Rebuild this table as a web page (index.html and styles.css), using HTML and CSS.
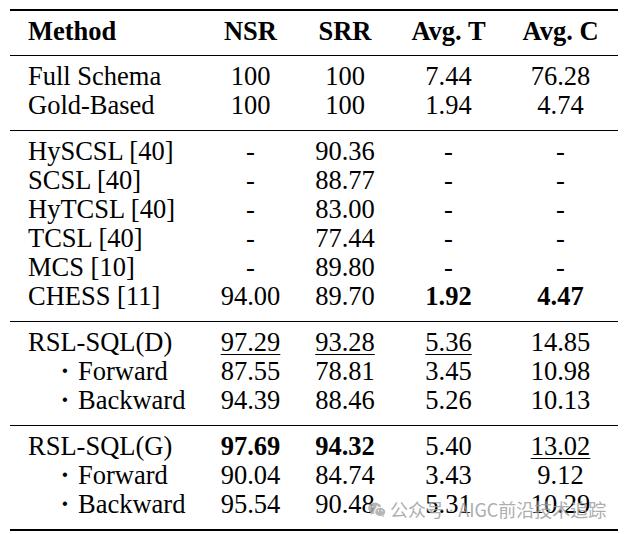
FILE: index.html
```html
<!DOCTYPE html>
<html lang="en">
<head>
<meta charset="utf-8">
<title>Table</title>
<link rel="stylesheet" href="styles.css">
</head>
<body>
<div class="page">
  <div class="table">
    <div class="sec head">
      <div class="c0">Method</div><div class="c">NSR</div><div class="c">SRR</div><div class="c">Avg. T</div><div class="c">Avg. C</div>
    </div>
    <div class="sec">
      <div class="c0">Full Schema</div><div class="c">100</div><div class="c">100</div><div class="c">7.44</div><div class="c">76.28</div>
      <div class="c0">Gold-Based</div><div class="c">100</div><div class="c">100</div><div class="c">1.94</div><div class="c">4.74</div>
    </div>
    <div class="sec">
      <div class="c0">HySCSL [40]</div><div class="c">-</div><div class="c">90.36</div><div class="c">-</div><div class="c">-</div>
      <div class="c0">SCSL [40]</div><div class="c">-</div><div class="c">88.77</div><div class="c">-</div><div class="c">-</div>
      <div class="c0">HyTCSL [40]</div><div class="c">-</div><div class="c">83.00</div><div class="c">-</div><div class="c">-</div>
      <div class="c0">TCSL [40]</div><div class="c">-</div><div class="c">77.44</div><div class="c">-</div><div class="c">-</div>
      <div class="c0">MCS [10]</div><div class="c">-</div><div class="c">89.80</div><div class="c">-</div><div class="c">-</div>
      <div class="c0">CHESS [11]</div><div class="c">94.00</div><div class="c">89.70</div><div class="c"><b>1.92</b></div><div class="c"><b>4.47</b></div>
    </div>
    <div class="sec">
      <div class="c0">RSL-SQL(D)</div><div class="c"><u>97.29</u></div><div class="c"><u>93.28</u></div><div class="c"><u>5.36</u></div><div class="c">14.85</div>
      <div class="c0 sub"><span class="dot">·</span>Forward</div><div class="c">87.55</div><div class="c">78.81</div><div class="c">3.45</div><div class="c">10.98</div>
      <div class="c0 sub"><span class="dot">·</span>Backward</div><div class="c">94.39</div><div class="c">88.46</div><div class="c">5.26</div><div class="c">10.13</div>
    </div>
    <div class="sec last">
      <div class="c0">RSL-SQL(G)</div><div class="c"><b>97.69</b></div><div class="c"><b>94.32</b></div><div class="c">5.40</div><div class="c"><u>13.02</u></div>
      <div class="c0 sub"><span class="dot">·</span>Forward</div><div class="c">90.04</div><div class="c">84.74</div><div class="c">3.43</div><div class="c">9.12</div>
      <div class="c0 sub"><span class="dot">·</span>Backward</div><div class="c">95.54</div><div class="c">90.48</div><div class="c">5.31</div><div class="c">10.29</div>
    </div>
  </div>
  <div class="watermark">
    <svg class="wx" width="18" height="16" viewBox="0 0 20 17">
      <ellipse cx="7.6" cy="6.6" rx="7.4" ry="6.3" fill="#a9a9a9"/>
      <path d="M3.2 11.2 L2.6 14 L5.8 12.3 Z" fill="#a9a9a9"/>
      <ellipse cx="13.6" cy="10.6" rx="6.2" ry="5.2" fill="#a9a9a9" stroke="#fff" stroke-width="1.2"/>
      <path d="M17.2 14.3 L18 16.6 L15.4 15.3 Z" fill="#a9a9a9"/>
      <circle cx="5.2" cy="4.8" r="1" fill="#fff"/>
      <circle cx="10" cy="4.8" r="1" fill="#fff"/>
      <circle cx="11.6" cy="9.4" r="0.8" fill="#fff"/>
      <circle cx="15.6" cy="9.4" r="0.8" fill="#fff"/>
    </svg>
    <span class="wm-text">公众号<span class="wm-sep"> · </span>AIGC前沿技术追踪</span>
  </div>
</div>
</body>
</html>
```

FILE: styles.css
```css
html, body {
  margin: 0;
  padding: 0;
  background: #fff;
}
.page {
  position: relative;
  width: 629px;
  height: 534px;
  overflow: hidden;
}
.table {
  margin: 9px 0 0 10px;
  width: 608px;
  border-top: 2px solid #000;
  border-bottom: 2px solid #000;
  font-family: "Liberation Serif", "Times New Roman", serif;
  font-size: 26.5px;
  line-height: 29px;
  color: #000;
}
.sec {
  display: grid;
  grid-template-columns: 195px 91px 98px 109px 115px;
  grid-auto-rows: 29px;
  padding: 6px 0 10px;
  border-bottom: 1px solid #000;
}
.sec.head {
  padding: 6px 0 9px;
  font-weight: bold;
}
.sec.last {
  border-bottom: none;
}
.c0 {
  padding-left: 18px;
  white-space: nowrap;
}
.c {
  text-align: center;
  white-space: nowrap;
}
.sub {
  display: flex;
}
.dot {
  display: inline-block;
  width: 16px;
  margin-left: 29px;
  margin-right: 5px;
  text-align: center;
  font-weight: bold;
}
b {
  font-weight: bold;
}
u {
  text-decoration: underline;
  text-decoration-thickness: 1px;
  text-underline-offset: 3px;
}
.watermark {
  position: absolute;
  left: 368px;
  top: 499px;
  display: flex;
  align-items: center;
  gap: 4px;
  opacity: 0.85;
}
.wm-text {
  font-family: "Noto Sans CJK SC", "Noto Sans", sans-serif;
  font-size: 18px;
  line-height: 20px;
  color: #a0a0a0;
  white-space: nowrap;
}
.wm-sep {
  font-family: "Noto Sans", sans-serif;
}
```
